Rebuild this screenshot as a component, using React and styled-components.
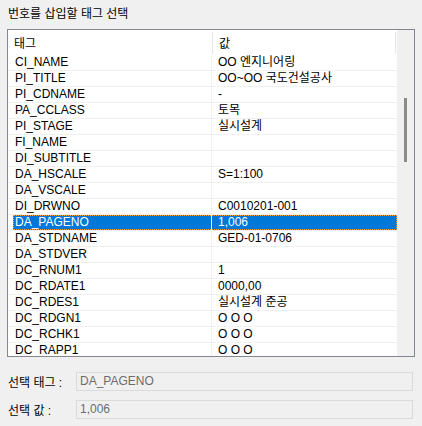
import React from "react";
import styled, { createGlobalStyle } from "styled-components";

const GlobalStyle = createGlobalStyle`
  body {
    margin: 0;
    background: #f0f0f0;
    font-family: "Liberation Sans", "Noto Sans CJK KR", sans-serif;
    font-size: 12px;
    color: #000;
  }
`;

const Dialog = styled.div`
  width: 422px;
  height: 426px;
  padding: 6px 0 0 7px;
  box-sizing: border-box;
  display: flex;
  flex-direction: column;
`;

const Title = styled.div`
  height: 16px;
  line-height: 16px;
  padding-left: 1px;
  margin-bottom: 7px;
`;

const ListBox = styled.div`
  width: 408px;
  height: 328px;
  box-sizing: border-box;
  border: 1px solid #828790;
  background: #fff;
  display: flex;
  overflow: hidden;
`;

const Table = styled.div`
  width: 389px;
  display: flex;
  flex-direction: column;
  overflow: hidden;
`;

const Header = styled.div`
  height: 25px;
  flex-shrink: 0;
  display: flex;
`;

const HeadCell = styled.div`
  width: ${(p) => p.$w}px;
  padding-left: ${(p) => p.$pad}px;
  box-sizing: border-box;
  display: flex;
  align-items: center;
  position: relative;
  &::after {
    content: "";
    position: absolute;
    right: 0;
    top: 2px;
    bottom: 1px;
    width: 1px;
    background: #e5e5e5;
  }
`;

const Row = styled.div`
  height: 16px;
  flex-shrink: 0;
  box-sizing: border-box;
  border-bottom: 1px solid #f0f0f0;
  padding-left: 5px;
  display: flex;
`;

const RowInner = styled.div`
  flex: 1;
  display: flex;
  background: ${(p) => (p.$selected ? "#0078d7" : "transparent")};
  color: ${(p) => (p.$selected ? "#fff" : "#000")};
  outline: ${(p) => (p.$selected ? "1px dotted #f0a040" : "none")};
  outline-offset: -1px;
`;

const NameCell = styled.div`
  width: 199px;
  box-sizing: border-box;
  padding-left: 2px;
  border-right: 1px solid #f0f0f0;
  line-height: 15px;
  white-space: nowrap;
`;

const ValueCell = styled.div`
  flex: 1;
  padding-left: 6px;
  line-height: 15px;
  white-space: nowrap;
`;

const ScrollTrack = styled.div`
  width: 17px;
  background: #f0f0f0;
  padding-top: 68px;
  padding-left: 7px;
  box-sizing: border-box;
`;

const ScrollThumb = styled.div`
  width: 3px;
  height: 64px;
  background: #8b8b8b;
`;

const Fields = styled.div`
  margin-top: 15px;
  display: flex;
  flex-direction: column;
  gap: 9px;
`;

const FieldRow = styled.div`
  display: flex;
  align-items: center;
`;

const Label = styled.div`
  width: 69px;
  padding-left: 1px;
  box-sizing: border-box;
`;

const ReadOnlyBox = styled.div`
  width: 337px;
  height: 19px;
  box-sizing: border-box;
  border: 1px solid #dadada;
  background: #f0f0f0;
  color: #6d6d6d;
  padding-left: 3px;
  line-height: 17px;
`;

const rows = [
  ["CI_NAME", "OO 엔지니어링"],
  ["PI_TITLE", "OO~OO 국도건설공사"],
  ["PI_CDNAME", "-"],
  ["PA_CCLASS", "토목"],
  ["PI_STAGE", "실시설계"],
  ["FI_NAME", ""],
  ["DI_SUBTITLE", ""],
  ["DA_HSCALE", "S=1:100"],
  ["DA_VSCALE", ""],
  ["DI_DRWNO", "C0010201-001"],
  ["DA_PAGENO", "1,006"],
  ["DA_STDNAME", "GED-01-0706"],
  ["DA_STDVER", ""],
  ["DC_RNUM1", "1"],
  ["DC_RDATE1", "0000,00"],
  ["DC_RDES1", "실시설계 준공"],
  ["DC_RDGN1", "O O O"],
  ["DC_RCHK1", "O O O"],
  ["DC_RAPP1", "O O O"],
];

const selected = "DA_PAGENO";

export default function App() {
  const current = rows.find((r) => r[0] === selected);
  return (
    <>
      <GlobalStyle />
      <Dialog>
        <Title>번호를 삽입할 태그 선택</Title>
        <ListBox>
          <Table>
            <Header>
              <HeadCell $w={205} $pad={6}>태그</HeadCell>
              <HeadCell $w={183} $pad={6}>값</HeadCell>
            </Header>
            {rows.map(([name, value]) => (
              <Row key={name}>
                <RowInner $selected={name === selected}>
                  <NameCell>{name}</NameCell>
                  <ValueCell>{value}</ValueCell>
                </RowInner>
              </Row>
            ))}
          </Table>
          <ScrollTrack>
            <ScrollThumb />
          </ScrollTrack>
        </ListBox>
        <Fields>
          <FieldRow>
            <Label>선택 태그 :</Label>
            <ReadOnlyBox>{current[0]}</ReadOnlyBox>
          </FieldRow>
          <FieldRow>
            <Label>선택 값 :</Label>
            <ReadOnlyBox>{current[1]}</ReadOnlyBox>
          </FieldRow>
        </Fields>
      </Dialog>
    </>
  );
}
